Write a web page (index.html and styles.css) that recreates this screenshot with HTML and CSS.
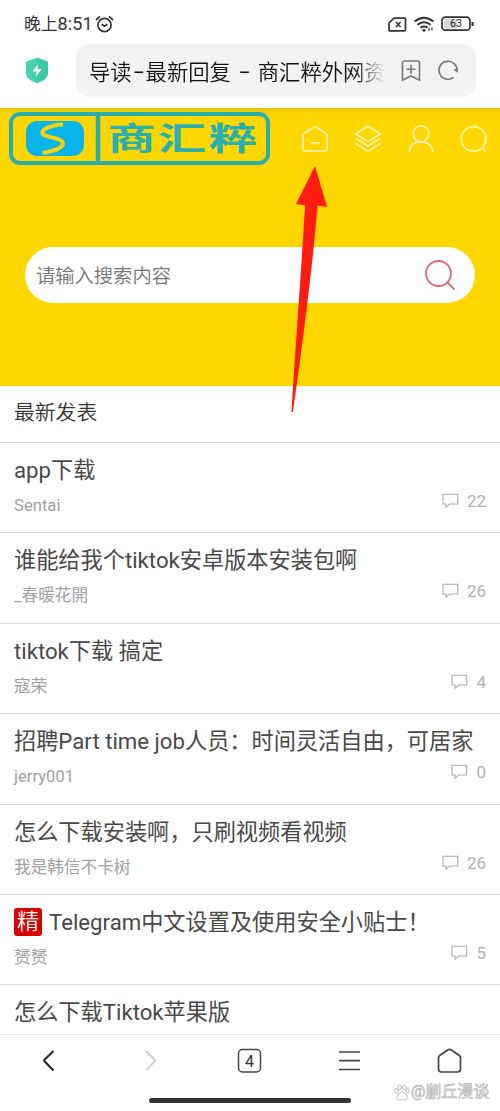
FILE: index.html
```html
<!DOCTYPE html>
<html lang="zh-CN">
<head>
<meta charset="utf-8">
<title>导读-最新回复</title>
<link rel="stylesheet" href="styles.css">
</head>
<body>
<div class="phone">
  <header class="status">
    <span class="clock">晚上<span class="digits">8:51</span></span>
    <svg class="alarm" width="19" height="19" viewBox="0 0 19 19" fill="none" stroke="#333" stroke-width="1.7"><circle cx="9.5" cy="10" r="6.6"/><path d="M6.7 9.2l2.8 2 2.8-2M1 5l4-3.6M18 5l-4-3.6"/></svg>
    <span class="grow"></span>
    <svg width="86" height="20" viewBox="0 0 86 20" fill="none" stroke="#333" stroke-width="1.7"><path d="M5 4.200h10.500q1 0 1 1v10.600q0 1-1 1H1q-1 0-1-1V9zM7 8l4.600 5M11.600 8L7 13"/><path d="M25.500 7.500q9.500-7.500 19 0M28.500 10.700q6.500-5 13 0M31.500 13.700q3.500-2.500 7 0" stroke-width="2"/><circle cx="35" cy="16.300" r="1.500" fill="#333" stroke="none"/><path d="M40 14v3M43 13.500v3" stroke-width="1.200"/><rect x="53" y="3.200" width="28" height="13" rx="3.500"/><path d="M83.600 8v4" stroke-width="2"/><rect x="55" y="5" width="13" height="9.500" fill="#d6d6d6" stroke="none"/><text x="67" y="13.300" class="battery">63</text></svg>
  </header>
  <div class="browser">
    <svg class="shield" width="24" height="27" viewBox="0 0 24 27"><path d="M12 .8L21.500 4q1.500.6 1.500 2v10c0 5-5 8-11 10.200C6 24 1 21 1 16V6q0-1.400 1.500-2z" fill="#46d1b0"/><path d="M12 .8L21.500 4q1.500.6 1.500 2v10c0 5-5 8-11 10.200z" fill="#36bfa5" opacity=".6"/><path d="M13.300 7L7.500 14.500h4l-.8 5.500 6-8h-4z" fill="#fff"/></svg>
    <div class="address">
      <span class="url">导读<span class="dash">−</span>最新回复<span class="sep">−</span>商汇粹外网资</span>
      <svg width="62" height="26" viewBox="0 0 62 26" fill="none" stroke="#777" stroke-width="1.600"><path d="M4.500 3h13q2 0 2 2v17.200L11 18l-8.500 4.200V5q0-2 2-2zM6.500 11.200h9M11 6.700v9"/><path d="M53.500 19.400A9 9 0 1 1 57 13"/><path d="M53.500 11.500l4.300 3.500V10z" fill="#777" stroke="none"/></svg>
    </div>
  </div>
  <section class="hero">
    <nav class="topnav">
      <svg width="262" height="54" viewBox="0 0 262 54"><rect x="2" y="2" width="257" height="49" rx="9" fill="none" stroke="#29b0ae" stroke-width="4"/><path d="M89 2v49" stroke="#29b0ae" stroke-width="4.500"/><rect x="17" y="9" width="58" height="35" rx="11" fill="#0cb5e9"/><path d="M54 12.500C42 13 33 17 33.500 21C34 26 54 25 54 32Q52 38 33.500 41" fill="none" stroke="#f6d40c" stroke-width="4"/><text class="logotext" transform="translate(98.500 37.500) scale(1.530 1)" x="0" y="0">商汇粹</text></svg>
      <div class="navicons">
        <svg width="28" height="30" viewBox="0 0 28 30"><path d="M2 11.500q0-1.500 1.200-2.200L12.600 3.200q1.400-.9 2.800 0l9.400 6.100q1.200.7 1.200 2.200V24.500q0 2.500-2.500 2.500h-19Q2 27 2 24.500zM9.500 18.800h9"/></svg>
        <svg width="28" height="30" viewBox="0 0 28 30"><path d="M14 2l12.500 8L14 17.500 1.500 10zM1.500 14.500L14 22l12.500-7.500M1.500 19.500L14 27.500l12.500-8"/></svg>
        <svg width="28" height="30" viewBox="0 0 28 30"><circle cx="14" cy="9.800" r="8"/><path d="M2 28.500q1-10.700 12-10.700t12 10.700"/></svg>
        <svg width="28" height="30" viewBox="0 0 28 30"><circle cx="13.500" cy="15" r="12.300"/><path d="M21.500 23.500l4 4"/></svg>
      </div>
    </nav>
    <div class="search"><span>请输入搜索内容</span><svg width="32" height="32" viewBox="0 0 32 32" fill="none" stroke="#dd6871" stroke-width="1.800"><circle cx="14.500" cy="14.500" r="12.500"/><path d="M23.500 23.500l7 7"/></svg></div>
  </section>
  <h2 class="heading">最新发表</h2>
  <main class="list">
    <article class="row"><h3>app下载</h3><div class="meta"><span>Sentai</span><span class="count"><svg class="bubble" viewBox="0 0 17 16"><path d="M1 1.200h14.700v9.800H7.500L4 14.300V11H1z"/></svg>22</span></div></article>
    <article class="row"><h3>谁能给我个tiktok安卓版本安装包啊</h3><div class="meta"><span>_春暖花開</span><span class="count"><svg class="bubble" viewBox="0 0 17 16"><path d="M1 1.200h14.700v9.800H7.500L4 14.300V11H1z"/></svg>26</span></div></article>
    <article class="row"><h3>tiktok下载 搞定</h3><div class="meta"><span>寇荣</span><span class="count"><svg class="bubble" viewBox="0 0 17 16"><path d="M1 1.200h14.700v9.800H7.500L4 14.300V11H1z"/></svg>4</span></div></article>
    <article class="row"><h3>招聘Part time job人员：时间灵活自由，可居家</h3><div class="meta"><span>jerry001</span><span class="count"><svg class="bubble" viewBox="0 0 17 16"><path d="M1 1.200h14.700v9.800H7.500L4 14.300V11H1z"/></svg>0</span></div></article>
    <article class="row"><h3>怎么下载安装啊，只刷视频看视频</h3><div class="meta"><span>我是韩信不卡树</span><span class="count"><svg class="bubble" viewBox="0 0 17 16"><path d="M1 1.200h14.700v9.800H7.500L4 14.300V11H1z"/></svg>26</span></div></article>
    <article class="row"><h3><span class="tag">精</span>Telegram中文设置及使用安全小贴士！</h3><div class="meta"><span>赟赟</span><span class="count"><svg class="bubble" viewBox="0 0 17 16"><path d="M1 1.200h14.700v9.800H7.500L4 14.300V11H1z"/></svg>5</span></div></article>
    <article class="row"><h3>怎么下载Tiktok苹果版</h3></article>
  </main>
  <footer class="toolbar">
    <div class="tools">
      <svg width="28" height="28" viewBox="0 0 28 28" stroke="#222" stroke-width="2"><path d="M17.500 4L8.500 12.700q-.8.8 0 1.600l9 9.200"/></svg>
      <svg width="28" height="28" viewBox="0 0 28 28" stroke="#ccc" stroke-width="1.800"><path d="M10 4l9.300 9.500L10 23.500"/></svg>
      <svg width="28" height="28" viewBox="0 0 28 28" stroke="#444" stroke-width="1.500"><rect x="2.500" y="2.500" width="22" height="22.500" rx="4"/><text class="tabs" x="13.500" y="19.500">4</text></svg>
      <svg width="28" height="28" viewBox="0 0 28 28" stroke="#444" stroke-width="1.700"><path d="M3 5h21M3 13.700h21M3 22.500h21"/></svg>
      <svg width="28" height="28" viewBox="0 0 28 28" stroke="#444" stroke-width="1.700"><path d="M2.500 11q0-1.500 1.200-2.500l8-5.500q1.800-1.300 3.600 0l8 5.500Q24.500 9.500 24.500 11v11q0 3-3 3H5.500q-3 0-3-3z"/></svg>
    </div>
    <div class="homebar"></div>
  </footer>
  <svg class="arrow" width="40" height="250" viewBox="0 0 40 250"><path d="M27 2L39 43l-9.500-1.200C24 110 13 190 5 248H3.500C7 190 13 110 17 41.500L8 40z" fill="#ff1d12"/></svg>
  <div class="watermark"><svg width="16" height="17" viewBox="0 0 16 17" fill="#fff" stroke="#aaa" stroke-width=".8"><ellipse cx="2.500" cy="7" rx="1.800" ry="2.400"/><ellipse cx="5.700" cy="3.300" rx="1.800" ry="2.500"/><ellipse cx="10.300" cy="3.300" rx="1.800" ry="2.500"/><ellipse cx="13.500" cy="7" rx="1.800" ry="2.400"/><path d="M8 7Q5.500 10 3 11.500C1.500 15 5 17 8 15.500c3 1.500 6.500-.5 5-4Q10.500 10 8 7z"/></svg><span>@剻丘漫谈</span></div>
</div>
</body>
</html>
```
FILE: styles.css
```css
* { box-sizing: border-box; }
body { margin: 0; background: #fff; font-family: Roboto, "Noto Sans CJK SC", sans-serif; }
.phone { position: relative; width: 500px; height: 1111px; overflow: hidden; display: flex; flex-direction: column; }
.status { height: 44px; flex: none; display: flex; align-items: center; padding: 4px 25px 0 24px; color: #333; }
.clock { font-size: 16.700px; line-height: 20px; white-space: nowrap; }
.digits { font-size: 18px; letter-spacing: .2px; }
.alarm { margin-left: 2px; }
.grow { flex: 1; }
.status svg { overflow: visible; }
.battery { font: 400 10.500px Roboto, sans-serif; fill: #222; stroke: none; text-anchor: middle; }
.browser { height: 64px; flex: none; display: flex; align-items: flex-start; padding-left: 25px; }
.shield { margin-top: 13px; }
.address { display: flex; align-items: center; justify-content: space-between; width: 400px; height: 53px; margin-left: 27px; padding: 0 14px 0 13px; border-radius: 14px; background: #f3f3f3; }
.url { width: 296px; white-space: nowrap; font-size: 21.300px; font-weight: 350; color: #111; -webkit-mask-image: linear-gradient(90deg, #000 266px, transparent 296px); mask-image: linear-gradient(90deg, #000 266px, transparent 296px); }
.dash, .sep { display: inline-block; width: 14px; text-align: center; font-weight: 400; }
.sep { width: 27px; }
.hero { height: 278px; flex: none; background: linear-gradient(#e6c403, #ffd700 6px); }
.topnav { height: 60px; display: flex; align-items: center; padding: 1px 12px 0 9px; }
.logotext { font: 700 31.500px "Noto Sans CJK SC", sans-serif; letter-spacing: 1.500px; fill: #29b0ae; }
.navicons { flex: 1; display: flex; justify-content: space-between; padding-left: 30px; }
.navicons svg { fill: none; stroke: #fff3b0; stroke-width: 1.700; }
.search { margin: 79px 25px 0; height: 56px; border-radius: 28px; background: #fff; display: flex; align-items: center; justify-content: space-between; padding: 0 19px 0 11px; font-size: 19.300px; font-weight: 350; color: #757575; }
.heading { margin: 0; height: 56px; flex: none; padding: 0 14px; font-size: 20.800px; font-weight: 350; line-height: 55px; color: #333; }
.list { flex: 1; min-height: 0; overflow: hidden; }
.row { height: 90.400px; border-top: 1.500px solid #d8d8d8; padding: 11px 14px 0; }
.row h3 { margin: 0; height: 33px; display: flex; align-items: center; font-size: 22.200px; line-height: 33px; font-weight: 400; white-space: pre; color: #484848; }
.tag { width: 28px; height: 28px; margin-right: 7px; border-radius: 3px; background: #d50000; color: #fff; font-size: 22px; line-height: 27px; text-align: center; font-weight: 350; }
.meta { display: flex; justify-content: space-between; height: 32px; font-size: 16.650px; line-height: 37px; color: #a0a0a0; }
.count { display: flex; align-items: center; line-height: 28px; height: 28px; font-size: 17px; color: #b0b0b0; }
.bubble { width: 17px; height: 16px; margin-right: 8px; fill: none; stroke: #aaa; stroke-width: 1.100; }
.toolbar { height: 77px; flex: none; border-top: 1px solid #e3e3e3; background: #fff; }
.tools { display: flex; justify-content: space-between; padding: 12px 36px 0; }
.tools svg { fill: none; }
.tabs { font: 400 16px Roboto, sans-serif; fill: #333; stroke: none; text-anchor: middle; }
.homebar { width: 202px; height: 5px; margin: 23px auto 0; border-radius: 3px; background: #333; }
.arrow { position: absolute; left: 288px; top: 164px; }
.watermark { position: absolute; left: 394px; top: 1082px; display: flex; align-items: center; gap: 1px; font-size: 16px; line-height: 20px; color: #fff; -webkit-text-stroke: .6px #aaa; white-space: nowrap; }
```
